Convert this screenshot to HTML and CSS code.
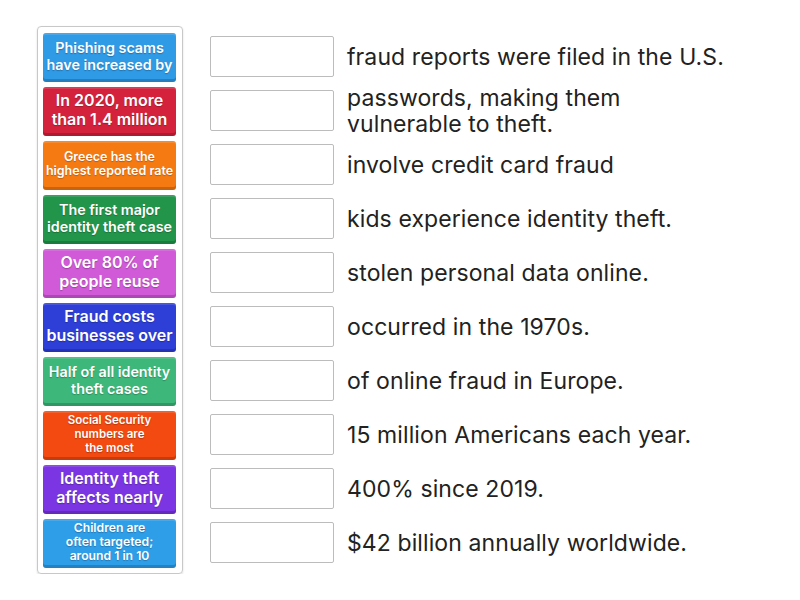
FILE: index.html
```html
<!DOCTYPE html>
<html lang="en">
<head>
  <meta charset="UTF-8">
  <title>Identity Theft Facts - Match Up</title>
  <meta name="viewport" content="width=device-width, initial-scale=1.0">
  <link rel="stylesheet" href="styles.css">
</head>
<body>
  <div class="board">
    <div class="tray">
      <div class="tile c1 fs14">Phishing scams<br>have increased by</div>
      <div class="tile c2 fs16">In 2020, more<br>than 1.4 million</div>
      <div class="tile c3 fs12">Greece has the<br>highest reported rate</div>
      <div class="tile c4 fs14">The first major<br>identity theft case</div>
      <div class="tile c5 fs16">Over 80% of<br>people reuse</div>
      <div class="tile c6 fs16">Fraud costs<br>businesses over</div>
      <div class="tile c7 fs14">Half of all identity<br>theft cases</div>
      <div class="tile c8 fs11">Social Security<br>numbers are<br>the most</div>
      <div class="tile c9 fs16">Identity theft<br>affects nearly</div>
      <div class="tile c10 fs11 wide">Children are<br>often targeted;<br>around 1 in 10</div>
    </div>

    <div class="answers">
      <div class="row"><div class="slot"></div><p>fraud reports were filed in the U.S.</p></div>
      <div class="row"><div class="slot"></div><p>passwords, making them<br>vulnerable to theft.</p></div>
      <div class="row"><div class="slot"></div><p>involve credit card fraud</p></div>
      <div class="row"><div class="slot"></div><p>kids experience identity theft.</p></div>
      <div class="row"><div class="slot"></div><p>stolen personal data online.</p></div>
      <div class="row"><div class="slot"></div><p>occurred in the 1970s.</p></div>
      <div class="row"><div class="slot"></div><p>of online fraud in Europe.</p></div>
      <div class="row"><div class="slot"></div><p>15 million Americans each year.</p></div>
      <div class="row"><div class="slot"></div><p>400% since 2019.</p></div>
      <div class="row"><div class="slot"></div><p>$42 billion annually worldwide.</p></div>
    </div>
  </div>
</body>
</html>
```

FILE: styles.css
```css
body {
  margin: 0;
  background: #fff;
  font-family: Inter, Lato, sans-serif;
  color: #222;
}

.board {
  display: flex;
  align-items: flex-start;
  padding: 26px 0 0 37px;
}

.tray {
  display: flex;
  flex-direction: column;
  gap: 5px;
  padding: 6px 6px 5px 5px;
  border: 1px solid #c8c8c8;
  border-radius: 4px;
  box-shadow: 0 1px 2px rgba(0, 0, 0, 0.15);
}

.tile {
  width: 133px;
  height: 49px;
  box-sizing: border-box;
  display: flex;
  align-items: center;
  justify-content: center;
  text-align: center;
  padding: 0 2px 3px;
  border-radius: 3px;
  color: #fff;
  font-weight: 600;
  white-space: nowrap;
  text-shadow: 0 1px 1px rgba(0, 0, 0, 0.25);
  box-shadow: inset 0 -3px 0 rgba(0, 0, 0, 0.18), inset 0 2px 0 rgba(255, 255, 255, 0.12);
}

.fs11 { font-size: 11.5px; line-height: 14px; }
.fs12 { font-size: 12.5px; line-height: 14px; }
.fs14 { font-size: 14.3px; line-height: 17px; }
.fs16 { font-size: 16px; line-height: 19px; }
.tile.wide { font-size: 12.2px; }

.c1 { background: #2f9ae6; }
.c2 { background: #d4223d; }
.c3 { background: #f67a12; }
.c4 { background: #22954b; }
.c5 { background: #d05ad8; }
.c6 { background: #2e3fd8; }
.c7 { background: #3db87a; }
.c8 { background: #f24a10; }
.c9 { background: #7b35e2; }
.c10 { background: #2f9ee8; }

.answers {
  display: flex;
  flex-direction: column;
  gap: 13px;
  margin-left: 27px;
  padding-top: 10px;
}

.row {
  display: flex;
  align-items: center;
  gap: 13px;
  height: 41px;
}

.slot {
  width: 124px;
  height: 41px;
  box-sizing: border-box;
  border: 1px solid #bcbcbc;
  border-radius: 2px;
  background: #fff;
  flex-shrink: 0;
}

.row p {
  margin: 0;
  font-size: 23px;
  line-height: 26px;
  letter-spacing: 0.1px;
}
```
